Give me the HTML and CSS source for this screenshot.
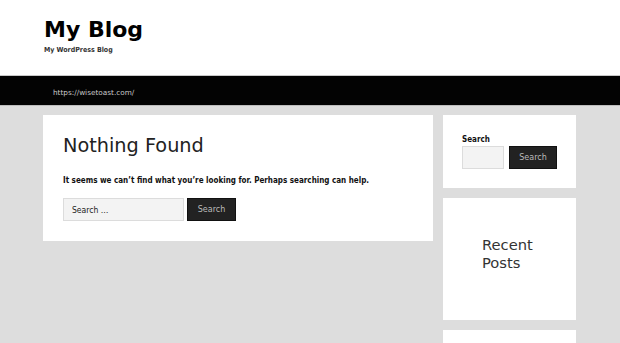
FILE: index.html
```html
<!DOCTYPE html>
<html>
<head>
<meta charset="utf-8">
<link rel="stylesheet" href="styles.css">
</head>
<body>
<header class="site-header">
  <div class="wrap">
    <div class="site-title">My Blog</div>
    <div class="site-desc">My WordPress Blog</div>
  </div>
</header>
<nav class="site-nav">
  <div class="wrap"><span class="nav-link">https://wisetoast.com/</span></div>
</nav>
<div class="content wrap">
  <main class="main-card">
    <h1 class="page-title">Nothing Found</h1>
    <p class="lead">It seems we can’t find what you’re looking for. Perhaps searching can help.</p>
    <form class="search-form">
      <input class="search-field" type="text" placeholder="Search …">
      <button class="search-btn" type="button">Search</button>
    </form>
  </main>
  <aside class="sidebar">
    <section class="widget widget-search">
      <div class="widget-label">Search</div>
      <div class="search-form">
        <input class="search-field small" type="text">
        <button class="search-btn" type="button">Search</button>
      </div>
    </section>
    <section class="widget widget-recent">
      <h2 class="widget-title">Recent Posts</h2>
    </section>
    <section class="widget widget-empty"></section>
  </aside>
</div>
</body>
</html>
```
FILE: styles.css
```css
html, body {
  margin: 0;
  padding: 0;
}
body {
  background: #dddddd;
  font-family: "DejaVu Sans", Verdana, sans-serif;
  color: #222;
  height: 343px;
  overflow: hidden;
}
.wrap {
  width: 533px;
  margin: 0 44px 0 43px;
  box-sizing: border-box;
}
.site-header {
  background: #fff;
  height: 75px;
  border-bottom: 1px solid #c8c8c8;
}
.site-header .wrap {
  padding: 17px 0 0 1px;
}
.site-title {
  font-size: 22px;
  font-weight: bold;
  line-height: 26px;
  color: #000;
}
.site-desc {
  font-family: "DejaVu Sans Condensed", "DejaVu Sans", sans-serif;
  font-stretch: condensed;
  font-size: 7px;
  font-weight: bold;
  color: #333;
  line-height: 10px;
  margin-top: 2px;
}
.site-nav {
  background: #030303;
  height: 29px;
  border-bottom: 1px solid #bdbdbd;
}
.site-nav .wrap {
  padding-left: 10px;
  line-height: 28px;
}
.nav-link {
  font-size: 7.3px;
  color: #c8c8c8;
}
.content {
  display: flex;
  gap: 10px;
  align-items: flex-start;
  padding-top: 9px;
}
.main-card {
  width: 390px;
  height: 126px;
  box-sizing: border-box;
  background: #fff;
  padding: 20px 20px 0 20px;
}
.page-title {
  margin: 0;
  font-size: 19.3px;
  font-weight: normal;
  line-height: 22px;
  color: #222;
}
.lead {
  margin: 18px 0 0;
  font-family: "DejaVu Sans Condensed", "DejaVu Sans", sans-serif;
  font-stretch: condensed;
  font-size: 8px;
  font-weight: bold;
  line-height: 11px;
  color: #111;
}
.search-form {
  display: flex;
  gap: 3px;
  margin-top: 12px;
}
.search-field {
  width: 121px;
  height: 23px;
  box-sizing: border-box;
  background: #f3f3f3;
  border: 1px solid #dcdcdc;
  padding: 0 8px;
  font-family: "DejaVu Sans Condensed", "DejaVu Sans", sans-serif;
  font-stretch: condensed;
  font-size: 8.5px;
  color: #222;
  outline: none;
}
.search-field::placeholder {
  color: #222;
}
.search-field.small {
  width: 42px;
}
.search-btn {
  width: 49px;
  height: 23px;
  border: 1px solid #111;
  background: #222;
  color: #bbb;
  font-family: "DejaVu Sans", Verdana, sans-serif;
  font-size: 8px;
  padding: 0;
}
.sidebar {
  width: 133px;
  display: flex;
  flex-direction: column;
  gap: 10px;
}
.widget {
  background: #fff;
  box-sizing: border-box;
}
.widget-search {
  height: 73px;
  padding: 19px 19px 0 19px;
}
.widget-label {
  font-family: "DejaVu Sans Condensed", "DejaVu Sans", sans-serif;
  font-stretch: condensed;
  font-size: 8px;
  font-weight: bold;
  line-height: 11px;
  color: #111;
}
.widget-search .search-form {
  margin-top: 1px;
  gap: 5px;
}
.widget-recent {
  height: 122px;
  padding: 38px 19px 0 39px;
}
.widget-title {
  margin: 0;
  font-size: 14.7px;
  font-weight: normal;
  line-height: 18px;
  color: #333;
}
.widget-empty {
  height: 40px;
}
```
